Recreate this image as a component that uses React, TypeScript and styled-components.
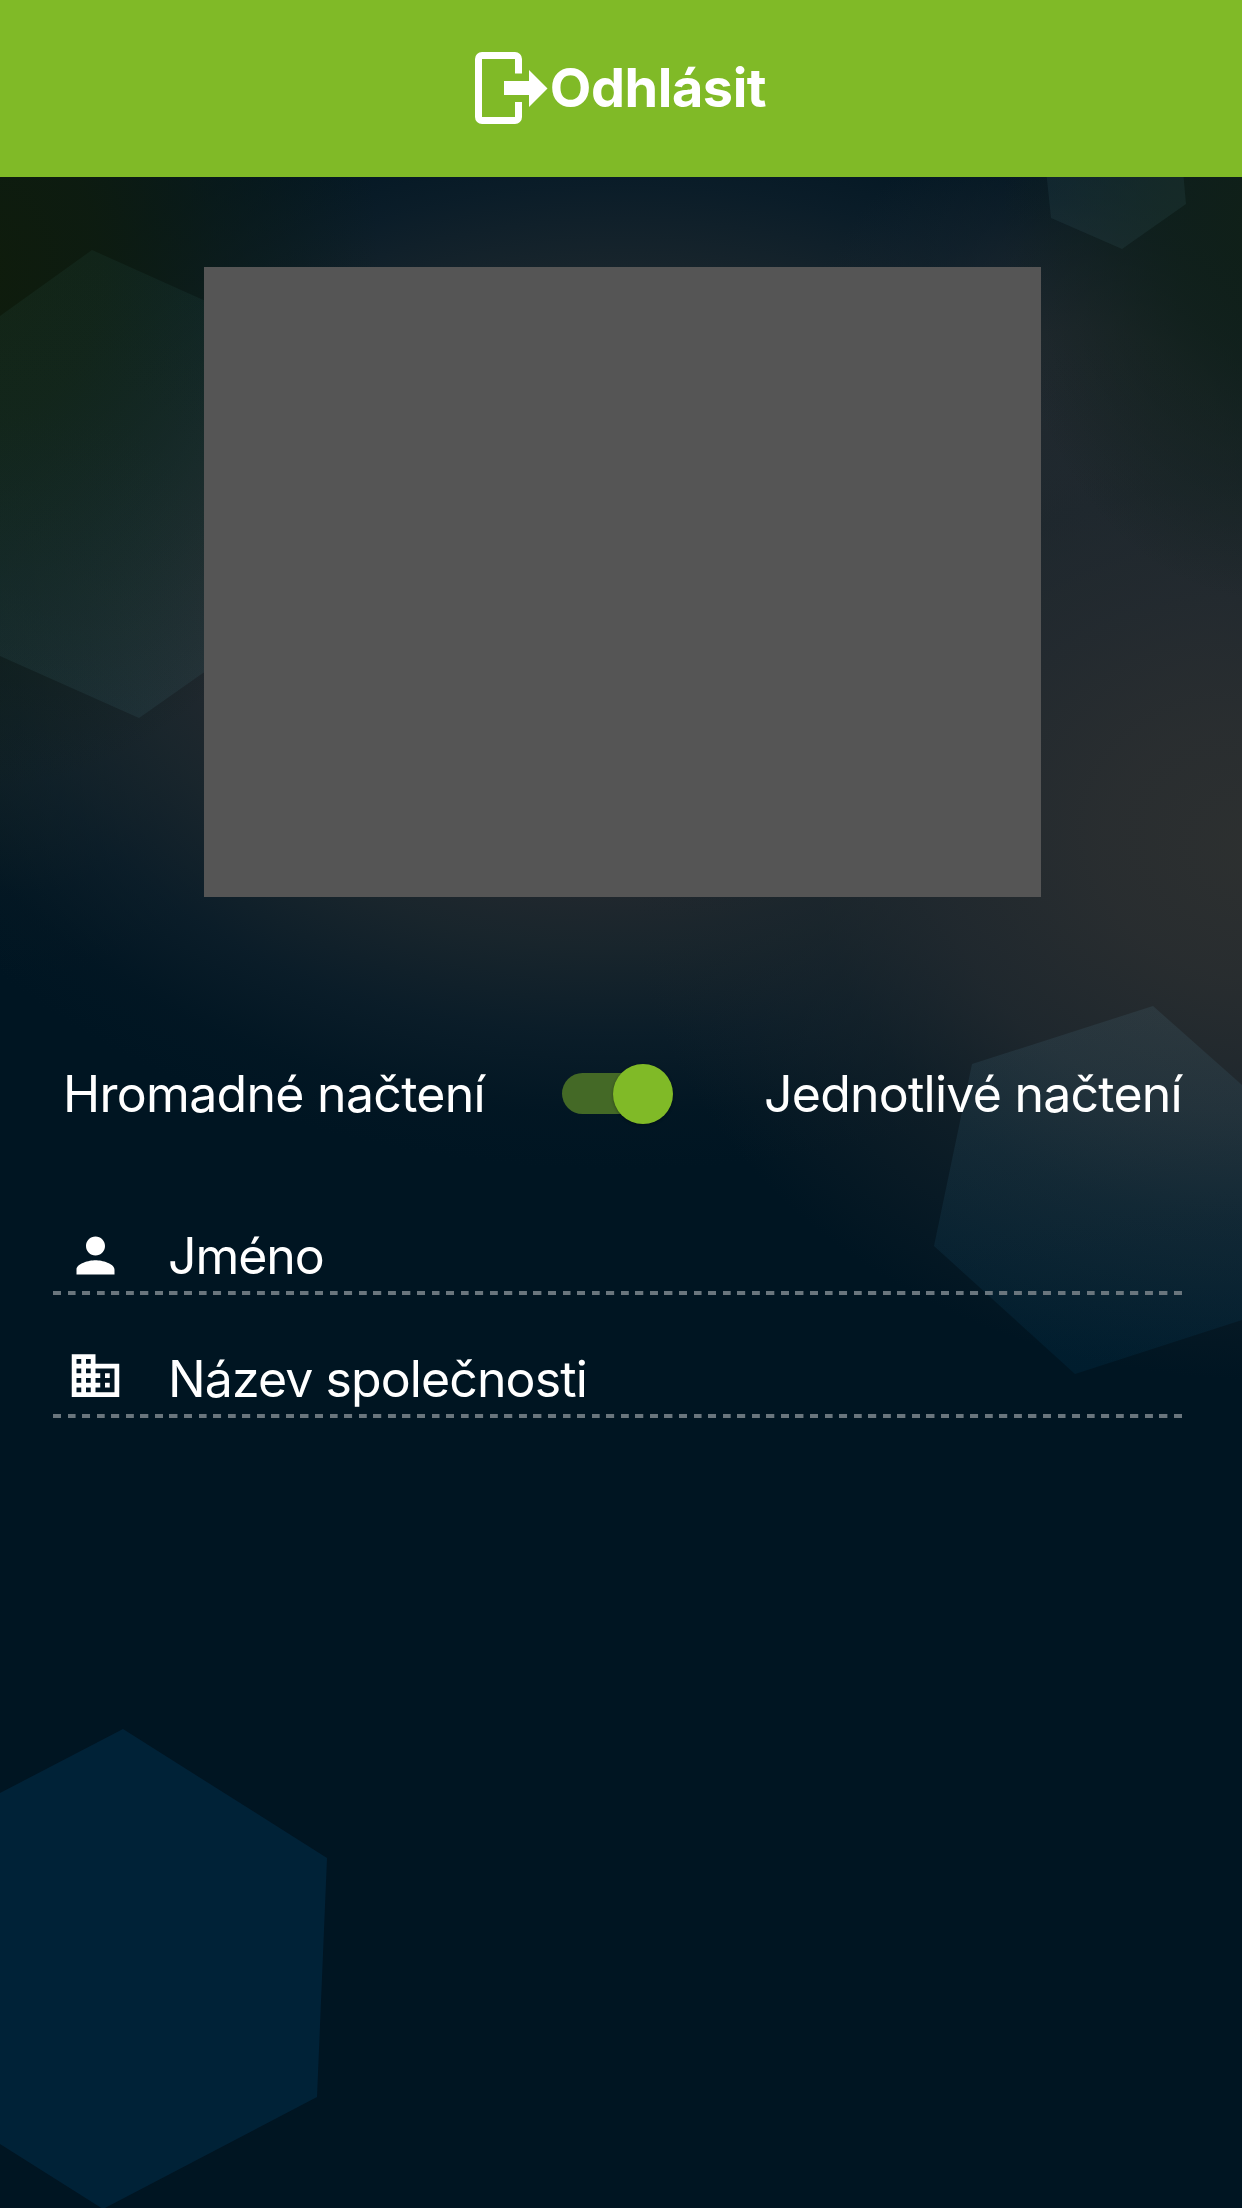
import React from "react";
import styled, { createGlobalStyle } from "styled-components";
import { MdBusiness, MdPerson } from "react-icons/md";

const GlobalStyle = createGlobalStyle`
  html, body { margin: 0; padding: 0; background: #001522; }
  *, *::before, *::after { box-sizing: border-box; }
`;

const Screen = styled.div`
  position: relative;
  isolation: isolate;
  display: flex;
  flex-direction: column;
  width: 1242px;
  height: 2208px;
  overflow: hidden;
  color: #fff;
  font-family: Inter, "Liberation Sans", sans-serif;
  background:
    radial-gradient(ellipse 400px 520px at -20px 270px, rgba(15, 28, 12, 1) 0%, rgba(14, 28, 15, 0.92) 30%, rgba(13, 28, 21, 0.6) 60%, rgba(13, 28, 26, 0) 100%),
    radial-gradient(ellipse 260px 380px at 1262px 220px, rgba(16, 32, 24, 1) 0%, rgba(16, 32, 25, 0.8) 35%, rgba(16, 32, 28, 0) 100%),
    radial-gradient(ellipse 640px 530px at 1262px 850px, rgba(45, 48, 48, 1) 0%, rgba(42, 46, 48, 0.95) 25%, rgba(35, 42, 47, 0.85) 50%, rgba(28, 38, 44, 0.5) 70%, rgba(12, 28, 38, 0) 100%),
    radial-gradient(ellipse 330px 430px at 1090px 520px, rgba(34, 42, 48, 1) 0%, rgba(33, 41, 47, 0.9) 45%, rgba(25, 37, 45, 0.4) 75%, rgba(18, 32, 42, 0) 100%),
    radial-gradient(ellipse 820px 560px at 620px 610px, rgba(36, 42, 48, 1) 0%, rgba(33, 40, 46, 1) 50%, rgba(29, 40, 46, 0.85) 60%, rgba(19, 35, 46, 0.55) 76%, rgba(10, 28, 40, 0.2) 90%, rgba(0, 21, 34, 0) 100%),
    radial-gradient(ellipse 320px 340px at 0 640px, rgba(20, 34, 30, 0.95) 0%, rgba(18, 33, 33, 0.7) 40%, rgba(8, 26, 34, 0.25) 75%, rgba(0, 21, 34, 0) 100%),
    #001522;
`;

const Artwork = styled.svg`
  position: absolute;
  inset: 0;
  z-index: -1;
`;

const LogoutBar = styled.button`
  display: flex;
  flex: none;
  align-items: center;
  justify-content: center;
  height: 177px;
  padding: 0 1px 2px 0;
  border: 0;
  background: #80ba27;
  color: #fff;
  font: 700 54px/66px Inter, "Liberation Sans", sans-serif;
`;

const LogoutIcon = styled.svg`
  width: 73px;
  height: 72px;
  margin-right: 2px;
`;

const LogoutLabel = styled.span`
  letter-spacing: -0.45px;
`;

const Preview = styled.div`
  flex: none;
  width: 837px;
  height: 630px;
  margin: 90px 0 0 204px;
  background: #555;
`;

const ModeRow = styled.div`
  display: flex;
  align-items: center;
  height: 62px;
  margin: 165px 51px 0 63px;
`;

const ModeLabel = styled.span<{ $width: number; $spacing: number }>`
  flex: none;
  width: ${(p) => p.$width}px;
  padding-top: 1px;
  font-size: 50px;
  line-height: 62px;
  white-space: nowrap;
  letter-spacing: ${(p) => p.$spacing}px;
`;

const Toggle = styled.div`
  display: flex;
  flex: none;
  align-items: center;
  justify-content: flex-end;
  width: 103px;
  height: 41px;
  margin: 1px 99px 0 0;
  border-radius: 21px;
  background: #446926;
`;

const Knob = styled.span`
  flex: none;
  width: 60px;
  height: 60px;
  margin-right: -8px;
  border-radius: 50%;
  background: #80ba27;
  box-shadow: 0 1px 3px rgba(0, 0, 0, 0.35);
`;

const Fields = styled.div`
  display: flex;
  flex-direction: column;
  margin: 48px 53px 0;
`;

const Field = styled.div`
  display: flex;
  align-items: center;
  height: 123px;
  padding: 53px 0 8px 14px;
  background: repeating-linear-gradient(90deg, #69757d 0 7.6px, transparent 8.4px 14.558px) 0 100% / 1130px 4px no-repeat;
`;

const FieldIcon = styled.span<{ $lift: number }>`
  display: flex;
  margin: 0 42px ${(p) => p.$lift}px 0;
  font-size: 57px;
`;

const FieldText = styled.span<{ $spacing: number }>`
  padding-left: 2px;
  font-size: 50px;
  line-height: 62px;
  letter-spacing: ${(p) => p.$spacing}px;
`;

export default function App() {
  return (
    <Screen>
      <GlobalStyle />
      <Artwork width="1242" height="2208" viewBox="0 0 1242 2208" aria-hidden="true">
        <defs>
          <linearGradient id="facetLeft" x1="0" y1="0" x2="0" y2="1">
            <stop offset="0" stopColor="#408c80" stopOpacity="0.08" />
            <stop offset="1" stopColor="#508c96" stopOpacity="0.11" />
          </linearGradient>
          <linearGradient id="facetRight" x1="0" y1="0" x2="0" y2="1">
            <stop offset="0" stopColor="#5c8c9f" stopOpacity="0.14" />
            <stop offset="1" stopColor="#004a72" stopOpacity="0.15" />
          </linearGradient>
        </defs>
        <polygon fill="#004266" fillOpacity="0.31" points="0,1793 123,1729 327,1858 317,2097 103,2209 0,2144" />
        <polygon fill="url(#facetLeft)" points="0,316 92,250 230,312 230,654 139,718 0,656" />
        <polygon fill="#508c96" fillOpacity="0.11" points="1046,170 1051,218 1122,249 1186,204 1183,170" />
        <polygon fill="url(#facetRight)" points="972,1064 1153,1006 1242,1085 1242,1320 1075,1374 934,1246" />
      </Artwork>
      <LogoutBar>
        <LogoutIcon viewBox="0 0 73 72" aria-hidden="true">
          <path d="M43.5 21.5V7a3.5 3.5 0 0 0-3.5-3.5H7A3.5 3.5 0 0 0 3.5 7v58A3.5 3.5 0 0 0 7 68.500h33a3.500 3.500 0 0 0 3.500-3.500V50" fill="none" stroke="#fff" strokeWidth="7" />
          <path d="M29 29h25V18l18.500 18.500L54 55V43H29z" fill="#fff" />
        </LogoutIcon>
        <LogoutLabel>Odhlásit</LogoutLabel>
      </LogoutBar>
      <Preview />
      <ModeRow>
        <ModeLabel $width={499} $spacing={-0.7}>Hromadné načtení</ModeLabel>
        <Toggle>
          <Knob />
        </Toggle>
        <ModeLabel $width={424} $spacing={-0.76}>Jednotlivé načtení</ModeLabel>
      </ModeRow>
      <Fields>
        <Field>
          <FieldIcon $lift={1}><MdPerson /></FieldIcon>
          <FieldText $spacing={-1.1}>Jméno</FieldText>
        </Field>
        <Field>
          <FieldIcon $lift={7}><MdBusiness /></FieldIcon>
          <FieldText $spacing={-0.9}>Název společnosti</FieldText>
        </Field>
      </Fields>
    </Screen>
  );
}
